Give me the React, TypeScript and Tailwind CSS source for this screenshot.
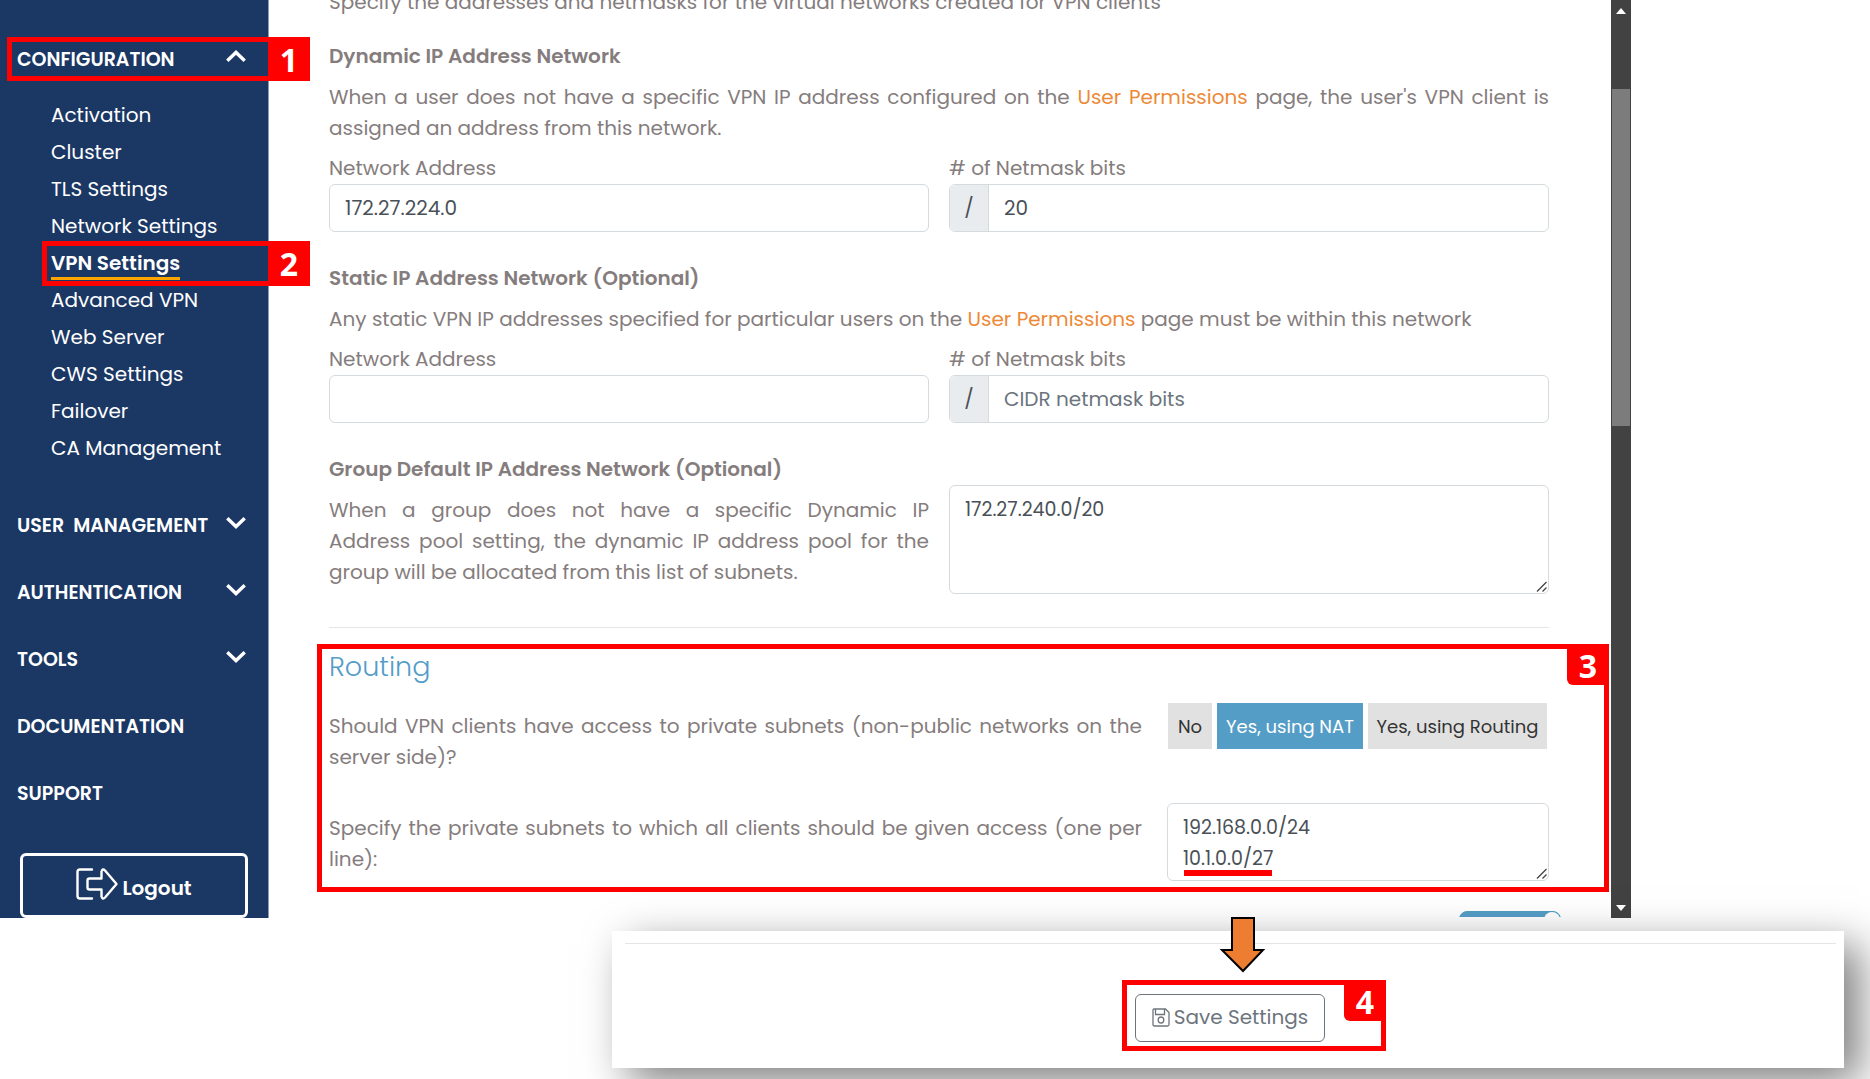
import clsx from "clsx";
import type { ReactNode } from "react";

const configLinks = [
  "Activation",
  "Cluster",
  "TLS Settings",
  "Network Settings",
  "VPN Settings",
  "Advanced VPN",
  "Web Server",
  "CWS Settings",
  "Failover",
  "CA Management",
];

const sections = [
  { name: "USER  MANAGEMENT", expandable: true },
  { name: "AUTHENTICATION", expandable: true },
  { name: "TOOLS", expandable: true },
  { name: "DOCUMENTATION", expandable: false },
  { name: "SUPPORT", expandable: false },
];

function App() {
  return (
    <div className="min-h-screen overflow-hidden bg-white font-['Poppins','Inter',sans-serif] text-[20px] leading-[31px] text-[#857d7d]">
      <div className="mr-[239px] flex">
        <Sidebar />
        <VpnSettings />
        <ScrollBar />
      </div>
      <SavePanel />
    </div>
  );
}

function Sidebar() {
  return (
    <nav className="flex w-[269px] shrink-0 flex-col border-r border-[#8c9bb3] bg-[#1b3764] pt-[37px] text-white">
      <div className="relative flex h-11">
        <SectionButton name="CONFIGURATION" expandable open />
        <div className="pointer-events-none absolute inset-y-0 left-[7px] -right-[42px] flex justify-end border-5 border-[#ff0000]">
          <StepBadge className="-my-[5px] -mr-[5px]">1</StepBadge>
        </div>
      </div>
      <ul className="mt-4 pl-[51px]">
        {configLinks.map((name) => (
          <li key={name} className="relative h-[37px]">
            <a
              href="#"
              className={clsx(
                "inline-block leading-[37px]",
                name === "VPN Settings" && "h-[35px] border-b-3 border-[#ffa500] font-semibold",
              )}
            >
              {name}
            </a>
            {name === "VPN Settings" && (
              <div className="pointer-events-none absolute -top-1 -right-[42px] -bottom-1 -left-[9px] flex justify-end border-5 border-[#ff0000]">
                <StepBadge className="-my-[5px] -mr-[5px]">2</StepBadge>
              </div>
            )}
          </li>
        ))}
      </ul>
      <div className="mt-[25px] flex flex-col">
        {sections.map((s) => (
          <div key={s.name} className="flex h-[67px]">
            <SectionButton name={s.name} expandable={s.expandable} />
          </div>
        ))}
      </div>
      <button className="mt-[26px] mr-5 ml-5 flex h-[65px] items-center justify-center gap-1 rounded-md border-3 border-white text-[20px] font-semibold">
        <LogoutIcon />
        <span className="pt-1.5">Logout</span>
      </button>
    </nav>
  );
}

type SectionButtonProps = {
  name: string;
  expandable?: boolean;
  open?: boolean;
};

function SectionButton(props: SectionButtonProps) {
  return (
    <button className="flex flex-1 items-center justify-between pr-[22px] pl-[17px] text-[19px] font-semibold whitespace-pre">
      {props.name}
      {props.expandable && (
        <svg
          className={clsx("mb-1.5 h-3 w-5", props.open && "rotate-180")}
          viewBox="0 0 20 12"
          fill="none"
          stroke="currentColor"
          strokeWidth="3.4"
        >
          <path d="M1.3 1.3 10 9.6 18.7 1.3" />
        </svg>
      )}
    </button>
  );
}

function StepBadge(props: { className?: string; children: ReactNode }) {
  return (
    <span
      className={clsx(
        "flex w-[42px] items-center justify-center bg-[#ff0000] font-['Open_Sans',sans-serif] text-[32px] font-bold text-white",
        props.className,
      )}
    >
      {props.children}
    </span>
  );
}

function VpnSettings() {
  return (
    <main className="min-w-0 flex-1 overflow-hidden pr-[62px] pl-[60px]">
      <p className="-mt-[13px]">
        Specify the addresses and netmasks for the virtual networks created for VPN clients
      </p>

      <h3 className="mt-[23px] font-semibold">Dynamic IP Address Network</h3>
      <p className="mt-2.5 text-justify">
        When a user does not have a specific VPN IP address configured on the <PermissionsLink /> page, the user's VPN
        client is assigned an address from this network.
      </p>
      <NetworkFields id="dynamic" address="172.27.224.0" bits="20" />

      <h3 className="mt-[31px] font-semibold">Static IP Address Network (Optional)</h3>
      <p className="mt-2.5">
        Any static VPN IP addresses specified for particular users on the <PermissionsLink /> page must be within this
        network
      </p>
      <NetworkFields id="static" address="" bits="" />

      <h3 className="mt-[31px] font-semibold">Group Default IP Address Network (Optional)</h3>
      <div className="grid grid-cols-2 gap-5">
        <label htmlFor="group-subnets" className="pt-2.5 text-justify">
          When a group does not have a specific Dynamic IP Address&nbsp;pool setting, the dynamic IP address pool for
          the group will be allocated from this list of subnets.
        </label>
        <TextArea id="group-subnets" className="h-[109px]" value="172.27.240.0/20" />
      </div>

      <hr className="mt-[33px] border-[#e5e5e5]" />
      <Routing />

      <div className="mt-[19px] -mr-3 flex h-1.5 justify-end overflow-hidden">
        <button
          aria-label="Toggle"
          className="flex h-9 w-[102px] justify-end rounded-lg border border-[#549dc7] bg-[#549dc7]"
        >
          <span className="h-full w-4 rounded-lg bg-white" />
        </button>
      </div>
    </main>
  );
}

function PermissionsLink() {
  return (
    <a href="#" className="text-[#ed8936]">
      User Permissions
    </a>
  );
}

type NetworkFieldsProps = {
  id: string;
  address: string;
  bits: string;
};

function NetworkFields(props: NetworkFieldsProps) {
  return (
    <div className="mt-[9px] grid grid-cols-2 gap-5">
      <div className="flex flex-col">
        <label htmlFor={`${props.id}-address`}>Network Address</label>
        <input
          id={`${props.id}-address`}
          className="h-12 rounded-md border border-[#d5dade] px-[15px] text-[#495057]"
          defaultValue={props.address}
        />
      </div>
      <div className="flex flex-col">
        <label htmlFor={`${props.id}-bits`}># of Netmask bits</label>
        <div className="flex h-12 rounded-md border border-[#d5dade]">
          <span className="flex w-[39px] items-center justify-center rounded-l-md border-r border-[#d5dade] bg-[#e9ecef] text-[#495057]">
            /
          </span>
          <input
            id={`${props.id}-bits`}
            className="min-w-0 flex-1 px-[15px] text-[#495057] placeholder:text-[#6c757d]"
            placeholder="CIDR netmask bits"
            defaultValue={props.bits}
          />
        </div>
      </div>
    </div>
  );
}

type TextAreaProps = {
  id: string;
  className: string;
  value: string;
};

function TextArea(props: TextAreaProps) {
  return (
    <div className="relative flex items-start">
      <textarea
        id={props.id}
        className={clsx(
          "w-full resize-none overflow-hidden rounded-md border border-[#d5dade] px-[15px] py-2 text-[19px] text-[#495057]",
          props.className,
        )}
        defaultValue={props.value}
      />
      <svg
        className="pointer-events-none absolute right-0.5 bottom-0.5 h-[11px] w-[11px]"
        viewBox="0 0 11 11"
        stroke="#444"
        strokeWidth="1.3"
      >
        <path d="M1 10.500 10.500 1M6.500 10.500 10.500 6.500" />
      </svg>
    </div>
  );
}

function Routing() {
  return (
    <section className="relative mt-4 pt-[5px] pb-[11px]">
      <h2 className="text-[27px] leading-9 font-light text-[#549dc7]">Routing</h2>
      <div className="mt-[18px] flex gap-[25px]">
        <p className="flex-1 pt-2 text-justify">
          Should VPN clients have access to private subnets (non-public networks on the server side)?
        </p>
        <div className="flex h-[46px] w-[382px] gap-[5px] pr-0.5 pl-px text-[18px] whitespace-nowrap text-[#333]">
          <button className="w-11 bg-[#e1e1e1]">No</button>
          <button className="w-[146px] bg-[#549dc7] text-white">Yes, using NAT</button>
          <button className="flex-1 bg-[#e1e1e1]">Yes, using Routing</button>
        </div>
      </div>
      <div className="mt-[30px] flex gap-[25px]">
        <label htmlFor="private-subnets" className="flex-1 pt-2.5 text-justify">
          Specify the private subnets to which all clients should be given access (one per line):
        </label>
        <div className="relative w-[382px]">
          <TextArea id="private-subnets" className="h-[78px]" value={"192.168.0.0/24\n10.1.0.0/27"} />
          <div className="absolute bottom-[5px] left-[17px] h-1.5 w-[88px] bg-[#ff0000]" />
        </div>
      </div>
      <div className="pointer-events-none absolute inset-y-0 -right-[60px] -left-3 flex items-start justify-end border-5 border-[#ff0000]">
        <StepBadge className="-mt-[5px] -mr-[5px] h-[41px] rounded-bl-md pt-0.5">3</StepBadge>
      </div>
    </section>
  );
}

function ScrollBar() {
  return (
    <div className="flex w-5 shrink-0 flex-col items-center bg-[#424242] pt-2 pb-[7px]">
      <svg className="h-[6px] w-[10px]" viewBox="0 0 10 6" fill="#fff">
        <path d="M5 0 10 6H0Z" />
      </svg>
      <div className="mt-[75px] h-[337px] w-[18px] bg-[#7c7c7c]" />
      <svg className="mt-auto h-[6px] w-[10px]" viewBox="0 0 10 6" fill="#fff">
        <path d="M0 0H10L5 6Z" />
      </svg>
    </div>
  );
}

function SavePanel() {
  return (
    <div className="relative mt-[13px] mr-[26px] ml-[612px] flex flex-col bg-white pt-3 pb-[17px] shadow-[16px_14px_40px_rgba(0,0,0,0.5)]">
      <hr className="mr-2 ml-[13px] border-[#e5e5e5]" />
      <div className="relative mt-9 mr-[458px] flex h-[71px] items-center self-end border-5 border-[#ff0000] pt-1 pr-14 pl-2">
        <button className="flex h-12 w-[190px] items-center justify-center gap-1 rounded-md border border-[#6c757d] whitespace-nowrap text-[#6c757d]">
          <SaveIcon />
          Save Settings
        </button>
        <StepBadge className="absolute -top-[5px] -right-[5px] h-[41px] rounded-bl-md pt-0.5">4</StepBadge>
      </div>
      <svg className="absolute -top-[14px] right-[578px] h-[56px] w-[48px]" viewBox="0 0 48 56">
        <path d="M14 1H36V33H45L25 54 4 33H14Z" fill="#ed7d31" stroke="#000" strokeWidth="2" />
      </svg>
    </div>
  );
}

function LogoutIcon() {
  return (
    <svg
      className="mb-1 h-8 w-[42px]"
      viewBox="0 0 42 32"
      fill="none"
      stroke="currentColor"
      strokeWidth="2.4"
      strokeLinecap="round"
      strokeLinejoin="round"
    >
      <path d="M16 1.500H4Q1.500 1.500 1.500 4V28Q1.500 30.500 4 30.500H16" />
      <path d="M13.500 10.500H25.500V3.500Q26.500 0 29 2.500L40.500 16 29 29.500Q26.500 32 25.500 28.500V21.500H13.500Q11.500 21.500 11.500 19.500V12.500Q11.500 10.500 13.500 10.500Z" />
    </svg>
  );
}

function SaveIcon() {
  return (
    <svg className="h-[19px] w-[18px]" viewBox="0 0 18 19" fill="none" stroke="currentColor" strokeWidth="1.300">
      <path d="M2 1H13.500L17 4.500V16.500Q17 18 15.500 18H2.500Q1 18 1 16.500V2Q1 1 2 1Z" />
      <path d="M3.500 1V6.500H12.500V1" />
      <ellipse cx="9" cy="12" rx="2.800" ry="3" />
    </svg>
  );
}

export default App;
